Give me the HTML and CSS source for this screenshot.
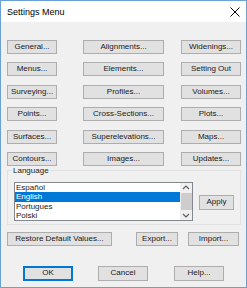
FILE: index.html
```html
<!DOCTYPE html>
<html>
<head>
<meta charset="utf-8">
<link rel="stylesheet" href="styles.css">
</head>
<body>
<div class="window">
  <div class="titlebar">
    <span class="title">Settings Menu</span>
    <svg class="close" width="10" height="10" viewBox="0 0 10 10"><path d="M0.5 0.5L9.5 9.5M9.5 0.5L0.5 9.5" stroke="#000" stroke-width="1" fill="none"/></svg>
  </div>
  <div class="client">
    <div class="grid">
      <div class="col col1">
        <button class="btn">General...</button>
        <button class="btn">Menus...</button>
        <button class="btn">Surveying...</button>
        <button class="btn">Points...</button>
        <button class="btn">Surfaces...</button>
        <button class="btn">Contours...</button>
      </div>
      <div class="col col2">
        <button class="btn">Alignments...</button>
        <button class="btn">Elements...</button>
        <button class="btn">Profiles...</button>
        <button class="btn">Cross-Sections...</button>
        <button class="btn">Superelevations...</button>
        <button class="btn">Images...</button>
      </div>
      <div class="col col3">
        <button class="btn">Widenings...</button>
        <button class="btn">Setting Out</button>
        <button class="btn">Volumes...</button>
        <button class="btn">Plots...</button>
        <button class="btn">Maps...</button>
        <button class="btn">Updates...</button>
      </div>
    </div>
    <fieldset class="group">
      <legend class="legend">Language</legend>
      <div class="listbox">
        <div class="items">
          <div class="item">Español</div>
          <div class="item sel">English</div>
          <div class="item">Portugues</div>
          <div class="item">Polski</div>
        </div>
        <div class="scrollbar">
          <svg class="arrow" width="12" height="9" viewBox="0 0 12 9"><path d="M3 6L6 3L9 6" stroke="#606060" stroke-width="1.2" fill="none"/></svg>
          <div class="thumb"></div>
          <svg class="arrow" width="12" height="9" viewBox="0 0 12 9"><path d="M3 3L6 6L9 3" stroke="#606060" stroke-width="1.2" fill="none"/></svg>
        </div>
      </div>
      <button class="btn apply">Apply</button>
    </fieldset>
    <div class="row mid">
      <button class="btn restore">Restore Default Values...</button>
      <button class="btn export">Export...</button>
      <button class="btn import">Import...</button>
    </div>
    <div class="row bottom">
      <button class="btn ok">OK</button>
      <button class="btn cancel">Cancel</button>
      <button class="btn help">Help...</button>
    </div>
  </div>
</div>
</body>
</html>
```

FILE: styles.css
```css
* { box-sizing: border-box; }
html, body { margin: 0; padding: 0; }
body {
  width: 247px;
  height: 288px;
  background: #ffffff;
  font-family: "Liberation Sans", Arial, sans-serif;
  font-size: 8px;
  color: #1a1a1a;
}
.window {
  width: 247px;
  height: 288px;
  border: 1px solid #6a9fd8;
  display: flex;
  flex-direction: column;
  background: #f0f0f0;
}
.titlebar {
  height: 21px;
  background: #ffffff;
  display: flex;
  align-items: center;
  justify-content: space-between;
  padding: 0 6px 0 6px;
  flex: none;
}
.title {
  font-size: 9px;
  color: #000;
  margin-top: 1px;
}
.close { display: block; }
.client {
  flex: 1;
  background: #f0f0f0;
  padding: 18px 0 0 6px;
  display: flex;
  flex-direction: column;
}
.btn {
  font-family: "Liberation Sans", Arial, sans-serif;
  font-size: 8px;
  color: #1a1a1a;
  background: #e1e1e1;
  border: 1px solid #adadad;
  height: 14px;
  padding: 0;
  margin: 0;
  line-height: 12px;
  text-align: center;
  white-space: nowrap;
  border-radius: 0;
}
.grid {
  display: flex;
}
.col {
  display: flex;
  flex-direction: column;
  row-gap: 8.4px;
}
.col1 { width: 50px; }
.col2 { width: 81px; margin-left: 26px; }
.col3 { width: 60px; margin-left: 17px; }
.group {
  margin: 0;
  width: 234px;
  border: 1px solid #e0e0e0;
  padding: 6px 6px 3px 6px;
  display: flex;
  align-items: center;
  min-width: 0;
}
.legend {
  font-size: 8px;
  line-height: 10px;
  padding: 0 1px;
  margin-left: -2px;
}
.listbox {
  width: 179px;
  height: 39px;
  border: 1px solid #828790;
  background: #fff;
  display: flex;
  overflow: hidden;
}
.items {
  flex: 1;
  overflow: hidden;
}
.item {
  height: 9.5px;
  line-height: 9.5px;
  padding-left: 1px;
  white-space: nowrap;
}
.item.sel {
  background: #0078d7;
  color: #fff;
}
.scrollbar {
  width: 12px;
  background: #f0f0f0;
  display: flex;
  flex-direction: column;
  justify-content: space-between;
  align-items: center;
}
.arrow { display: block; }
.thumb {
  width: 11px;
  flex: 1;
  background: #cdcdcd;
  margin: 1px 0;
}
.apply {
  width: 35px;
  height: 15px;
  margin-left: 6px;
  margin-top: 2px;
}
.row { display: flex; }
.mid { margin-top: 7px; }
.restore { width: 105px; }
.export { width: 42px; margin-left: 24px; }
.import { width: 51px; margin-left: 10px; }
.bottom { margin-top: 20px; padding-left: 16px; }
.bottom .btn { width: 50px; height: 15px; }
.ok { border-color: #0078d7; box-shadow: inset 0 0 0 1px #0078d7; }
.cancel { margin-left: 25px; }
.help { margin-left: 26px; }
```
